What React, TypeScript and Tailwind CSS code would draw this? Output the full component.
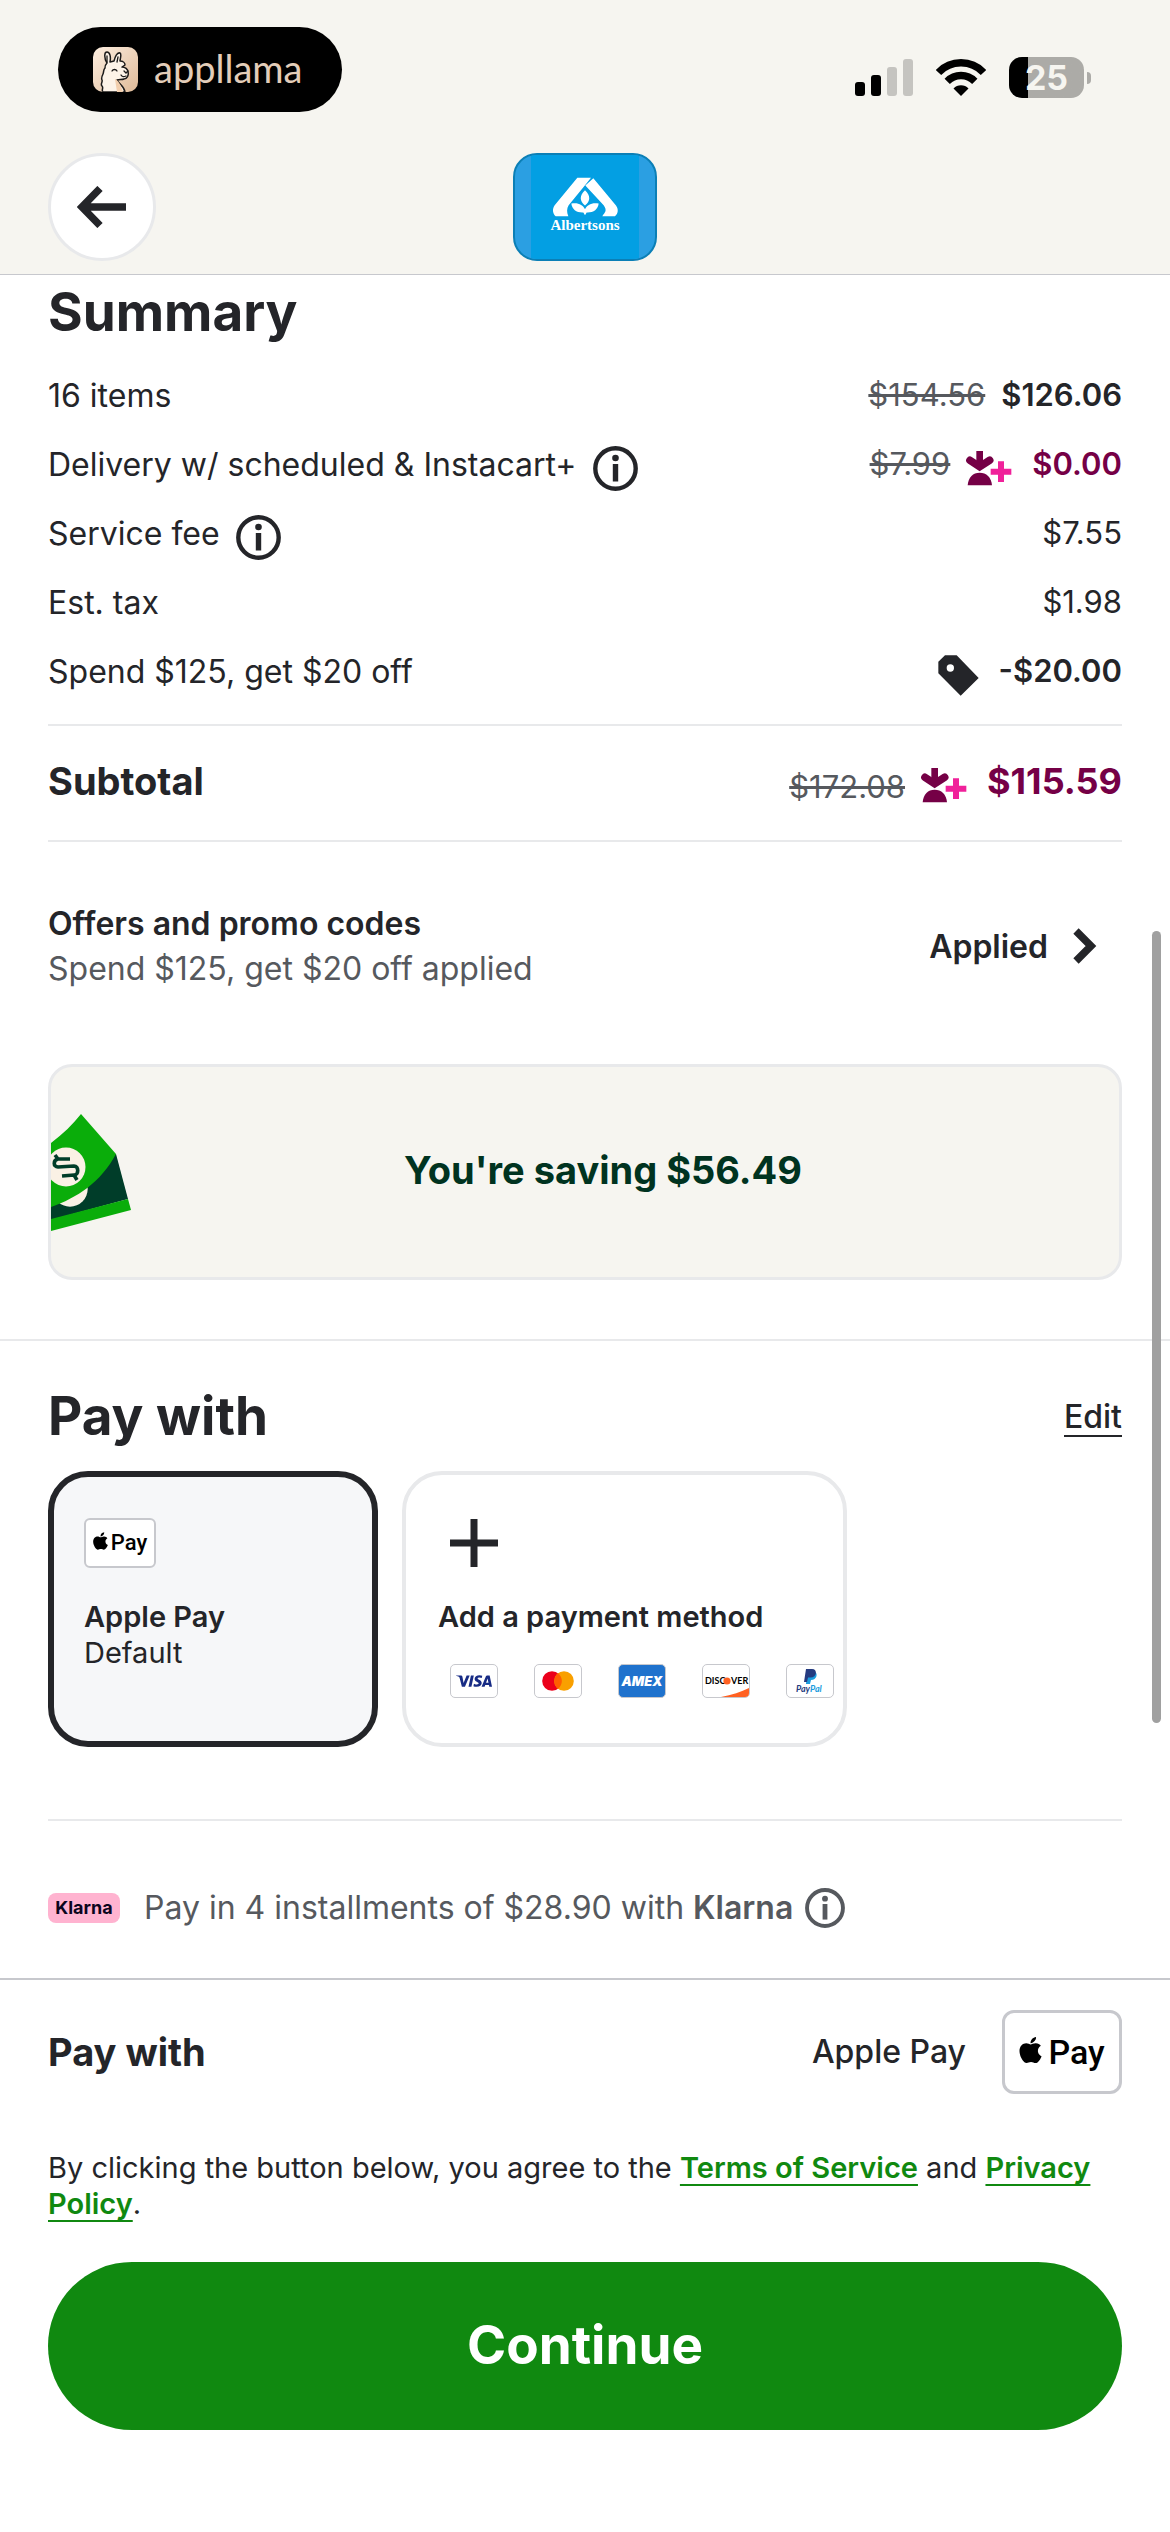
import React from 'react';
import { FaApple } from 'react-icons/fa6';
import { SiVisa } from 'react-icons/si';

const LlamaIcon = () => (
  <svg width="45" height="45" viewBox="0 0 45 45" fill="none" aria-hidden="true">
    <defs>
      <linearGradient id="llama-bg" x1="0" y1="0" x2="1" y2="1">
        <stop offset="0" stopColor="#fdeee0" />
        <stop offset="1" stopColor="#dfba98" />
      </linearGradient>
      <clipPath id="llama-clip">
        <rect width="45" height="45" rx="10" />
      </clipPath>
    </defs>
    <g clipPath="url(#llama-clip)">
      <rect width="45" height="45" fill="url(#llama-bg)" />
      <path
        d="M10 45c-2-2 1-4-1-6s1-4 0-6 0-4 1-6 0-4 2-6c0-2 0-3 2-5C11 11 11 5 14 5s4 5 3 10l4-1c1-4 3-9 6-8 2 1 0 6 0 8 3 0 5 2 5 4l-3 2c3 0 6 2 6 5 1 3-1 7-4 7-2 1-5 0-7 1 2 4 7 6 8 12z"
        fill="#fdf3e8"
        stroke="#1d1b1a"
        strokeWidth="1.5"
        strokeLinejoin="round"
      />
      <path d="M19 24c1-2 4-2 5 0M31 24l2 2 2-2M28 28c1 2 3 2 5 1M14 9v6M25 10l-1 5" stroke="#1d1b1a" strokeWidth="1.3" strokeLinecap="round" />
      <path d="M22 32c3 1 6 6 8 13h-6z" fill="#f3cfae" />
    </g>
  </svg>
);

const SignalIcon = () => (
  <svg width="58" height="37" viewBox="0 0 58 37" aria-hidden="true">
    <rect x="0" y="23" width="10" height="14" rx="3" />
    <rect x="16" y="16" width="10" height="21" rx="3" />
    <rect x="32" y="8" width="10" height="29" rx="3" fill="#c5c4c0" />
    <rect x="48" y="0" width="10" height="37" rx="3" fill="#c5c4c0" />
  </svg>
);

const WifiIcon = () => (
  <svg width="50" height="37" viewBox="0 0 50 37" fill="none" stroke="#000" strokeWidth="7.4" aria-hidden="true">
    <path d="M2.5 13.5a31 31 0 0 1 45 0" />
    <path d="M11.2 22.3a19.3 19.3 0 0 1 27.6 0" />
    <path d="M25 37l-7.5-7.6a10.5 10.5 0 0 1 15 0z" fill="#000" stroke="none" />
  </svg>
);

const AlbertsonsLogo = () => (
  <svg width="70" height="42" viewBox="240 135 210 125" fill="#fff" aria-hidden="true">
    <path d="M322 140h41l-18 22-49 60c-6 9-6 21-1 33h-38c-9-8-11-22-3-33z" />
    <path d="M370 141l68 82c8 11 7 24-3 32h-38c7-12 16-16 4-33l-55-59z" />
    <path d="M345 177c17 16 17 32 0 46c-17-14-17-30 0-46z" />
    <path d="M304 217c20-4 35 4 41 17 6-13 21-21 41-17-2 18-16 28-36 27l-5 8-5-8c-20 1-34-9-36-27z" />
  </svg>
);

const InfoIcon = ({ size = 45 }) => (
  <svg width={size} height={size} viewBox="0 0 45 45" fill="currentColor" aria-hidden="true">
    <circle cx="22.5" cy="22.5" r="20.2" fill="none" stroke="currentColor" strokeWidth="4.4" />
    <circle cx="22.5" cy="12" r="3.3" />
    <rect x="19.8" y="18" width="5.4" height="17.5" />
  </svg>
);

const CarrotPlusIcon = () => (
  <svg className="mt-2 mr-1" width="46" height="35" viewBox="622 303 138 105" role="img" aria-label="Instacart+">
    <path d="M653 303h20v40h-20z" fill="#750046" />
    <path d="M634 331l29 19 30-19" fill="none" stroke="#750046" strokeWidth="23" strokeLinecap="round" />
    <path d="M627 406c2-25 16-38 36-38s35 13 37 38z" fill="#750046" />
    <path d="M718 334h18v22h22v18h-22v22h-18v-22h-22v-18h22z" fill="#f0219a" />
  </svg>
);

const TagIcon = () => (
  <svg className="mt-2 mr-1" width="41" height="41" viewBox="530 916 123 123" aria-hidden="true">
    <path
      d="M531 936l20-19h35l66 68-54 53-67-67zM567 944a11 11 0 1 0 0 22 11 11 0 0 0 0-22z"
      fill="#242529"
      fillRule="evenodd"
    />
  </svg>
);

const MoneyIcon = () => (
  <svg width="84" height="132" viewBox="0 0 84 132" fill="none" aria-hidden="true">
    <path d="M65 48l12 45L0 114V60z" fill="#003d29" />
    <circle cx="19" cy="83" r="17.7" fill="#faf1e5" />
    <path d="M77 93l3 11-80 21v-12z" fill="#0aad0a" />
    <path d="M30 8l35 40C50 76 26 92 0 101V37C12 28 22 18 30 8z" fill="#0aad0a" />
    <circle cx="15" cy="61" r="19.5" fill="#faf1e5" />
    <path d="M4 49l3 4h12M7 53c-5 1-5 8 0 8l16-1c5 0 5 9 0 9l-12 1M23 69l3 5" stroke="#003d29" strokeWidth="3.6" />
  </svg>
);

const ApplePayChip = ({ large = false }) => (
  <span
    className={
      large
        ? "flex h-[84px] w-[120px] items-center justify-center gap-[6px] rounded-xl border-3 border-[#c7c8cd] bg-white font-['Roboto'] text-[34px] font-medium text-black"
        : "flex h-[50px] w-[72px] items-center justify-center gap-[3px] rounded-md border-2 border-[#c7c8cd] bg-white font-['Roboto'] text-[22px] font-medium text-black"
    }
  >
    <FaApple className={large ? 'mb-1 h-[30px] w-[23px]' : 'mb-1 h-5 w-[15px]'} />
    Pay
  </span>
);

const CardChip = ({ label, className = 'bg-white', children }: { label: string; className?: string; children: React.ReactNode }) => (
  <span
    role="img"
    aria-label={label}
    className={`flex h-[34px] w-12 items-center justify-center overflow-hidden rounded-[5px] border border-[#c7c8cd] ${className}`}
  >
    {children}
  </span>
);

const summaryRows = [
  { label: '16 items', was: '$154.56', price: '$126.06', strong: true },
  { label: 'Delivery w/ scheduled & Instacart+', info: true, was: '$7.99', plus: true, price: '$0.00', strong: true },
  { label: 'Service fee', info: true, price: '$7.55' },
  { label: 'Est. tax', price: '$1.98' },
  { label: 'Spend $125, get $20 off', tag: true, price: '-$20.00', strong: true },
];

const Header = () => (
  <header className="border-b border-[#c7c8cd] bg-[#f6f5f0] pt-[27px] pb-[13px]">
    <div className="flex items-center justify-between pr-[79px] pl-[58px]">
      <div className="flex h-[85px] w-[284px] items-center gap-4 rounded-full bg-black pl-[35px]">
        <LlamaIcon />
        <span className="pb-1 font-['Lato'] text-[38px] leading-none text-[#e3cdb9]">appllama</span>
      </div>
      <div className="mt-4 flex items-center gap-[23px]">
        <SignalIcon />
        <WifiIcon />
        <div className="flex items-center gap-[3px]">
          <div className="flex h-[41px] w-[75px] items-center justify-center rounded-[13px] bg-linear-to-r from-black from-25% to-[#acaba7] to-25% text-[34px] font-bold text-[#f6f5f0]">
            25
          </div>
          <div className="h-3 w-1 rounded-r-full bg-[#acaba7]" />
        </div>
      </div>
    </div>
    <div className="mt-[41px] grid grid-cols-3 items-center px-12">
      <button aria-label="Back" className="flex size-[108px] items-center justify-center rounded-full border-3 border-[#e8e9eb] bg-white">
        <svg width="50" height="42" viewBox="0 0 50 42" fill="none" stroke="#242529" strokeWidth="7.4" aria-hidden="true">
          <path d="M49 21H6M23 2.500L5 21l18 18.500" />
        </svg>
      </button>
      <button className="flex h-[108px] w-36 justify-center justify-self-center overflow-hidden rounded-3xl border-2 border-[#0b7fb6] bg-[#2b9fe2]">
        <span className="flex h-full w-[108px] flex-col items-center bg-[#039fe3] pt-[21px]">
          <AlbertsonsLogo />
          <span className="font-['Liberation_Serif'] text-[15px] leading-[14px] font-bold text-white">Albertsons</span>
        </span>
      </button>
    </div>
  </header>
);

const Summary = () => (
  <section className="px-12">
    <h2 className="mb-5 text-[53px] leading-[58px] font-bold">Summary</h2>
    <ul>
      {summaryRows.map((row) => (
        <li key={row.label} className="flex h-[69px] items-center justify-between">
          <span className="flex items-center gap-4">
            {row.label}
            {row.info && (
              <button aria-label={`About ${row.label}`} className="mt-2">
                <InfoIcon />
              </button>
            )}
          </span>
          <span className="flex items-center gap-4 text-[31px]">
            {row.was && <s className="text-[#56595e]">{row.was}</s>}
            {row.plus && <CarrotPlusIcon />}
            {row.tag && <TagIcon />}
            <span className={row.plus ? 'font-semibold text-[#750046]' : row.strong ? 'font-semibold' : ''}>{row.price}</span>
          </span>
        </li>
      ))}
    </ul>
    <div className="mt-[18px] flex h-[118px] items-center justify-between border-y-2 border-[#e8e9eb] pb-1 text-[38px] font-bold">
      <h3>Subtotal</h3>
      <span className="flex items-center gap-4">
        <s className="pt-3 text-[31px] font-normal text-[#56595e]">$172.08</s>
        <CarrotPlusIcon />
        <span className="text-[36px] text-[#750046]">$115.59</span>
      </span>
    </div>

    <button className="mt-[59px] flex w-full items-center justify-between pr-6 text-left leading-[45px]">
      <span>
        <span className="block font-semibold">Offers and promo codes</span>
        <span className="block text-[#56595e]">Spend $125, get $20 off applied</span>
      </span>
      <span className="flex items-center gap-6 font-semibold">
        Applied
        <svg width="26" height="36" viewBox="0 0 26 36" fill="none" stroke="#242529" strokeWidth="7.5" aria-hidden="true">
          <path d="M4 3l15 15L4 33" />
        </svg>
      </span>
    </button>

    <div className="relative mt-[73px] flex h-[216px] items-center justify-center rounded-3xl border-3 border-[#e8e9eb] bg-[#f6f5f0] pb-1 pl-9 text-[38px] font-bold text-[#003320]">
      <div className="absolute top-[39px] left-0">
        <MoneyIcon />
      </div>
      You're saving $56.49
    </div>
  </section>
);

const PayWith = () => (
  <section className="mt-[59px] border-t-2 border-[#e8e9eb] px-12 pt-[46px]">
    <div className="flex items-center justify-between">
      <h2 className="text-[53px] leading-[58px] font-bold">Pay with</h2>
      <button className="mt-1 border-b-2 border-[#242529] leading-9 font-medium">Edit</button>
    </div>
    <div className="mt-[26px] flex gap-6 border-b-2 border-[#e8e9eb] pb-[72px] text-[29px] leading-9">
      <button aria-pressed="true" className="flex h-[276px] w-[330px] flex-col items-start rounded-[40px] border-6 border-[#242529] bg-[#f6f7f9] pt-[41px] pl-[30px]">
        <ApplePayChip />
        <span className="mt-[31px] font-semibold">Apple Pay</span>
        <span>Default</span>
      </button>
      <button className="flex h-[276px] w-[445px] flex-col items-start rounded-[40px] border-4 border-[#e8e9eb] pt-11 pl-8">
        <svg className="ml-3" width="48" height="48" viewBox="0 0 48 48" stroke="#242529" strokeWidth="7" aria-hidden="true">
          <path d="M24 0v48M0 24h48" />
        </svg>
        <span className="mt-8 font-semibold">Add a payment method</span>
        <span className="mt-[29px] ml-3 flex gap-9">
          <CardChip label="Visa">
            <SiVisa className="size-9 shrink-0 text-[#172b85]" />
          </CardChip>
          <CardChip label="Mastercard">
            <svg width="32" height="20" viewBox="0 0 32 20">
              <circle cx="10" cy="10" r="9.800" fill="#eb001b" />
              <circle cx="22" cy="10" r="9.800" fill="#f9a000" />
              <path d="M16 2.200a9.800 9.800 0 0 1 0 15.600 9.800 9.800 0 0 1 0-15.600z" fill="#ff5f00" />
            </svg>
          </CardChip>
          <CardChip label="American Express" className="bg-[#1f72cd]">
            <span className="text-[13px] font-black text-white italic">AMEX</span>
          </CardChip>
          <CardChip label="Discover">
            <svg width="46" height="32" viewBox="0 0 46 32">
              <path d="M46 23v9H18c11-2 20-5 28-9z" fill="#ff6122" />
              <text x="2" y="19" fontSize="9" fontWeight="700" fontFamily="Lato, sans-serif">DISC</text>
              <circle cx="24" cy="16" r="3.600" fill="#ff6122" />
              <text x="28" y="19" fontSize="9" fontWeight="700" fontFamily="Lato, sans-serif">VER</text>
            </svg>
          </CardChip>
          <CardChip label="PayPal">
            <svg width="46" height="32" viewBox="0 0 46 32">
              <path d="M20 7h8c3 1 2 8-4 8l-1 4h-4z" fill="#1b9cde" />
              <path d="M19 4h6c6 0 5 9-2 8.500h-2L20 17h-3z" fill="#253b80" />
              <text x="9" y="27" fontSize="9" fontWeight="700" fontStyle="italic" fontFamily="Lato, sans-serif" fill="#253b80">
                Pay<tspan fill="#1b9cde">Pal</tspan>
              </text>
            </svg>
          </CardChip>
        </span>
      </button>
    </div>
    <div className="flex items-center gap-6 pt-16 pb-[47px] leading-[46px] text-[#56595e]">
      <span className="flex h-[30px] w-[72px] items-center justify-center rounded-lg bg-[#ffb3d0] text-[18px] font-bold text-[#0b051d]">Klarna</span>
      <p className="flex items-center gap-3">
        <span>
          Pay in 4 installments of $28.90 with <b className="font-semibold">Klarna</b>
        </span>
        <button aria-label="About Klarna">
          <InfoIcon size={40} />
        </button>
      </p>
    </div>
  </section>
);

const Footer = () => (
  <footer className="border-t-2 border-[#c7c8cd] bg-white px-12 pt-[30px] pb-[102px]">
    <div className="flex items-center justify-between">
      <h3 className="text-[38px] font-bold">Pay with</h3>
      <span className="flex items-center gap-9 font-medium">
        Apple Pay
        <ApplePayChip large />
      </span>
    </div>
    <p className="mt-14 text-[29px] leading-9">
      By clicking the button below, you agree to the{' '}
      <a href="#terms" className="font-semibold text-[#108910] underline decoration-2 underline-offset-6">Terms of Service</a> and{' '}
      <a href="#privacy" className="font-semibold text-[#108910] underline decoration-2 underline-offset-6">Privacy Policy</a>.
    </p>
    <button className="mt-10 h-[168px] w-full rounded-full bg-[#108910] text-[53px] font-bold text-white">Continue</button>
  </footer>
);

const App = () => {
  return (
    <div className="relative min-h-screen bg-white font-['Inter',sans-serif] text-[32px] text-[#242529]">
      <Header />
      <main className="pt-2">
        <Summary />
        <PayWith />
      </main>
      <Footer />
      {/* Scroll indicator */}
      <div className="absolute top-[931px] right-[9px] h-[792px] w-[9px] rounded-full bg-[#a0a0a0]" />
    </div>
  );
};

export default App;
